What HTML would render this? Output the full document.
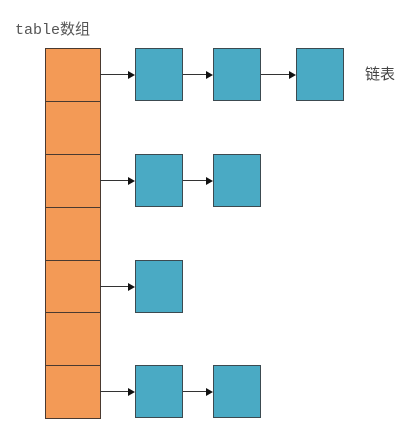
<!DOCTYPE html>
<html><head><style>
body{margin:0;width:416px;height:421px;background:#fff;position:relative;overflow:hidden;font-family:"Liberation Mono","Noto Sans CJK SC",monospace}
.c{position:absolute;left:45px;width:54px;height:52px;background:#f39a56;border:1px solid #4a3a30}
.b{position:absolute;width:46px;height:51px;background:#4aaac4;border:1px solid #3c4a50}
.a{position:absolute;height:1px;background:#333}
.t{position:absolute;width:0;height:0;border-left:7px solid #111;border-top:4px solid transparent;border-bottom:4px solid transparent}
</style></head><body>
<div style="position:absolute;left:15px;top:18px;font-size:15px;color:#555">table数组</div>
<div style="position:absolute;left:365px;top:63px;font-size:15px;color:#444;font-family:'Noto Sans CJK SC',sans-serif">链表</div>
<div class="c" style="top:48px"></div>
<div class="c" style="top:101px"></div>
<div class="c" style="top:154px"></div>
<div class="c" style="top:207px"></div>
<div class="c" style="top:260px"></div>
<div class="c" style="top:312px"></div>
<div class="c" style="top:365px"></div>

<div class="b" style="left:135px;top:48px"></div>
<div class="b" style="left:213px;top:48px"></div>
<div class="b" style="left:296px;top:48px"></div>
<div class="b" style="left:135px;top:154px"></div>
<div class="b" style="left:213px;top:154px"></div>
<div class="b" style="left:135px;top:260px"></div>
<div class="b" style="left:135px;top:365px"></div>
<div class="b" style="left:213px;top:365px"></div>

<div class="a" style="left:100px;top:74px;width:30px"></div><div class="t" style="left:128px;top:71px"></div>
<div class="a" style="left:183px;top:74px;width:25px"></div><div class="t" style="left:206px;top:71px"></div>
<div class="a" style="left:261px;top:74px;width:30px"></div><div class="t" style="left:289px;top:71px"></div>
<div class="a" style="left:100px;top:180px;width:30px"></div><div class="t" style="left:128px;top:177px"></div>
<div class="a" style="left:183px;top:180px;width:25px"></div><div class="t" style="left:206px;top:177px"></div>
<div class="a" style="left:100px;top:286px;width:30px"></div><div class="t" style="left:128px;top:283px"></div>
<div class="a" style="left:100px;top:391px;width:30px"></div><div class="t" style="left:128px;top:388px"></div>
<div class="a" style="left:183px;top:391px;width:25px"></div><div class="t" style="left:206px;top:388px"></div>
</body></html>
